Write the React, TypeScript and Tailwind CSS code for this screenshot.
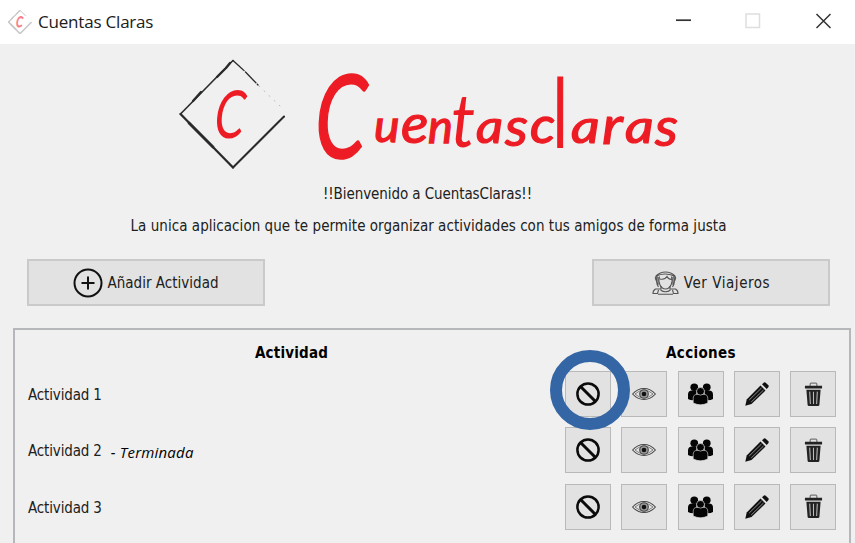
import React from "react";

const ui = "font-['DejaVu_Sans_Condensed','DejaVu_Sans',sans-serif] [font-stretch:condensed]";

function Mark({ className, faded = false }: { className: string; faded?: boolean }) {
  return (
    <svg className={className} viewBox="0 0 108 110" opacity={faded ? 0.55 : 1}>
      <g fill="none" stroke={faded ? "#999" : "#2a2a2a"} strokeLinecap="round">
        <path d="M1.500 55L54 1.500" strokeWidth={faded ? 5 : 1.6} />
        <path d="M22 33L14 42M46 10L38 18M51 4L47 9" strokeWidth={faded ? 5 : 2.300} />
        <path d="M1.500 55L54 108.500" strokeWidth={faded ? 7 : 2.300} />
        <path d="M10 64L34 88" strokeWidth={faded ? 7 : 2.800} />
        <path d="M54 108.500L105 57.500" strokeWidth={faded ? 7 : 2} />
        <path d="M54 1.500L66 12.500L79 26" strokeWidth={faded ? 4 : 1.300} strokeDasharray="9 1 5 2" />
        <path d="M80 27L101 47" strokeWidth=".7" opacity=".4" strokeDasharray="1 6" />
      </g>
      <text
        transform="translate(34 78.500) skewX(-5) scale(.95 1.300)"
        fontSize="51"
        fill={faded ? "#f01028" : "#ed1c24"}
        stroke={faded ? "#f01028" : "none"}
        strokeWidth={faded ? 3 : 0}
        className="font-['Lato',sans-serif] italic"
      >
        C
      </text>
    </svg>
  );
}

const letters = [
  { c: "C", t: "translate(314 158) skewX(-2) scale(1.780 2.520)", w: 0.7 },
  { c: "u", t: "translate(374 142) scale(1.050 .98)", w: 1.3 },
  { c: "e", t: "translate(401 143) scale(1.250 1.180)", w: 1 },
  { c: "n", t: "translate(428 143) scale(1.020 1.020)", w: 1.3 },
  { c: "t", t: "translate(451 147) scale(1.480 1.600)", w: 0 },
  { c: "a", t: "translate(476 143) scale(1.150 1)", w: 1.2 },
  { c: "s", t: "translate(505 146) scale(1.250 1.180)", w: 1 },
  { c: "c", t: "translate(530 143) scale(1.200 1.080)", w: 1.2 },
  { c: "l", t: "translate(556 147) skewX(4) scale(1.200 2.050)", w: 0.9 },
  { c: "a", t: "translate(571 143) scale(1.220 1)", w: 1.2 },
  { c: "r", t: "translate(602 144) scale(1.320 1.150)", w: 1 },
  { c: "a", t: "translate(625 143) scale(1.220 1)", w: 1.2 },
  { c: "s", t: "translate(655 146) scale(1.250 1.180)", w: 1 },
];

function Wordmark() {
  return (
    <svg className="h-[110px] w-[380px] overflow-visible" viewBox="310 66 380 110" fill="#ed1c24" stroke="#ed1c24">
      <g className="font-['Lato',sans-serif] italic" fontSize="46">
        {letters.map((l, i) => (
          <text key={i} transform={l.t} strokeWidth={l.w}>{l.c}</text>
        ))}
      </g>
    </svg>
  );
}

function Ban() {
  return (
    <svg className="h-6 w-6" viewBox="0 0 24 24" fill="none" stroke="#0b0b0b" strokeWidth="2.500">
      <circle cx="12" cy="12" r="10.600" />
      <path d="M4.500 4.500L19.500 19.500" strokeWidth="3" />
    </svg>
  );
}

function Eye() {
  return (
    <svg className="h-6 w-6" viewBox="0 0 24 24" fill="none" stroke="#454545" strokeWidth="1.100">
      <path d="M.6 12Q5.500 6.500 12 6.500T23.400 12Q18.500 17.500 12 17.500T.6 12Z" />
      <path d="M3 12Q7 8.300 12 8.300T21 12Q17 15.800 12 15.800T3 12Z" strokeWidth=".6" />
      <circle cx="12" cy="12" r="4.300" fill="#999" />
      <circle cx="12" cy="12" r="2.300" fill="#111" stroke="none" />
    </svg>
  );
}

function Group() {
  return (
    <svg className="h-6 w-[25px]" viewBox="0 0 24 24" preserveAspectRatio="none" fill="#050505">
      <circle cx="6" cy="5.300" r="3.700" />
      <circle cx="18" cy="5.300" r="3.700" />
      <path d="M0 17v-4.500Q0 8.500 4 8.500h4v9.500Q3 19 0 17ZM24 17v-4.500Q24 8.500 20 8.500h-4v9.500Q21 19 24 17Z" />
      <g stroke="#e2e2e2" strokeWidth=".6">
        <path d="M5 21v-4.500Q5 12.300 9 12.300h6q4 0 4 4.200V21Q12 24.500 5 21Z" />
        <circle cx="12" cy="9.300" r="3.800" />
      </g>
    </svg>
  );
}

function Pencil() {
  return (
    <svg className="h-6 w-6" viewBox="0 0 24 24" fill="#111">
      <path d="M.3 23.700L1.700 17.500 15.500 3.500 20.500 8.500 6.500 22Z" />
      <path d="M17 2.200L19 .5Q20 0 21 1L23.400 3.200Q24.200 4 23.300 5.200L21.700 7Z" />
      <path d="M4.200 18L16.500 6M6.200 20L18.500 8" stroke="#aaa" strokeWidth=".8" />
    </svg>
  );
}

function Trash() {
  return (
    <svg className="h-[25px] w-[19px]" viewBox="0 0 20 26" fill="#222">
      <path d="M6.500 4V2q0-1 1-1h5q1 0 1 1v2" fill="none" stroke="#777" strokeWidth="1.300" />
      <path d="M1 3.700h18v3H1ZM2.500 8h15l-1.300 16q-.1 1.200-1.500 1.200H5.300q-1.400 0-1.500-1.200Z" />
      <path d="M6 10l.7 13M10 10v13M14 10l-.7 13" stroke="#bbb" strokeWidth="1.100" />
    </svg>
  );
}

function Traveler() {
  return (
    <svg className="h-6 w-[27px]" viewBox="0 0 27 24" fill="none" stroke="#555" strokeWidth="1.100">
      <path d="M4 5Q8 1 13.500 1T23 5M4 5Q2.500 7 4 9.500M23 5Q24.500 7 23 9.500M4 5.500Q8 2.800 13.500 3T23 5.500" />
      <path d="M7.500 5.500Q6 10 8 14Q10 18 13.500 18T19 14Q21 10 19.500 5.500M8 8Q13 9 15 5.500Q16 8 19.500 8.500" />
      <path d="M5 4.500Q3.500 12 6.500 16M22 4.500Q23.500 12 20.500 16M6 6v8M21 6v8" />
      <path d="M9 15v3L3.500 18Q.8 19.500 1 22.500H5.500L6.500 19M18 15v3l5.500 0Q26.200 19.500 26 22.500H21.500L20.500 19M6 23.200H21M8.500 19Q13.500 22.500 18.500 19" />
    </svg>
  );
}

function ActionButton({ children }: { children: React.ReactNode }) {
  return (
    <button className="relative flex h-[46px] w-[46px] shrink-0 items-center justify-center border border-[#b9b9b9] bg-[#e2e2e2]">
      {children}
    </button>
  );
}

const activities = [
  { name: "Actividad 1", done: false, highlight: true },
  { name: "Actividad 2", done: true, highlight: false },
  { name: "Actividad 3", done: false, highlight: false },
];

export default function App() {
  return (
    <div className={`flex h-[543px] w-[855px] flex-col overflow-hidden bg-[#f0f0f0] text-[15px] text-[#202020] ${ui}`}>
      <header className="flex h-11 shrink-0 items-center bg-white pl-2">
        <Mark className="h-6 w-6" faded />
        <span className="ml-[6px] flex-1 font-['Open_Sans',sans-serif] text-[17px] tracking-[-0.2px] [font-stretch:normal]">Cuentas Claras</span>
        <svg className="h-11 w-[190px]" viewBox="665 0 190 44" fill="none" stroke="#333">
          <path d="M676 20.200h15" strokeWidth="1.700" />
          <rect x="746" y="14" width="13.500" height="13.500" stroke="#dedede" strokeWidth="1.500" />
          <path d="M816.500 14l14 14M830.500 14l-14 14" strokeWidth="1.500" />
        </svg>
      </header>

      <section className="flex h-[135px] shrink-0 pl-[179px] pt-[15px]">
        <Mark className="h-[110px] w-[108px]" />
        <div className="ml-[23px] mt-[7px]"><Wordmark /></div>
      </section>
      <section className="flex h-[80px] shrink-0 flex-col items-center pt-[5px] leading-5 whitespace-nowrap">
        <p className="tracking-[-0.08px]">!!Bienvenido a CuentasClaras!!</p>
        <p className="mt-[12px] pl-[2px] tracking-[0.045px]">La unica aplicacion que te permite organizar actividades con tus amigos de forma justa</p>
      </section>

      <div className="flex h-[69px] shrink-0 justify-between pl-[27px] pr-[25px]">
        <button className="flex h-[47px] w-[238px] items-center justify-center border-2 border-[#cacaca] bg-[#e2e2e2]">
          <svg className="mr-1 h-[30px] w-[30px]" viewBox="0 0 30 30" fill="none" stroke="#111" strokeWidth="2">
            <circle cx="15" cy="15" r="13.500" />
            <path d="M8.500 15h13M15 8.500v13" />
          </svg>
          <span className="pt-[2px] tracking-[0.02px]">Añadir Actividad</span>
        </button>
        <button className="flex h-[47px] w-[238px] items-center justify-center border-2 border-[#cacaca] bg-[#e2e2e2]">
          <Traveler />
          <span className="ml-[5px] pt-[2px] tracking-[0.55px]">Ver Viajeros</span>
        </button>
      </div>

      <main className="ml-[13px] mr-1 flex-1 border-2 border-b-0 border-[#b5b7ba] pt-[13px]">
        <div className="flex h-7 font-bold leading-5 text-black">
          <span className="w-[553px] text-center tracking-[0.2px]">Actividad</span>
          <span className="w-[266px] text-center tracking-[0.35px]">Acciones</span>
        </div>
        <div className="flex flex-col gap-[10.400px]">
          {activities.map((a) => (
            <div key={a.name} className="flex h-[46px] items-center pl-[13px]">
              <div className="flex w-[537px] items-center">
                <span className="pt-[2px] tracking-[-0.15px]">{a.name}</span>
                {a.done && (
                  <span className="ml-[9px] mt-1 font-['Open_Sans',sans-serif] text-[15px] italic tracking-[0.2px] text-black [font-stretch:normal]">- Terminada</span>
                )}
              </div>
              <div className="flex gap-[10.300px]">
                <ActionButton>
                  <Ban />
                  {a.highlight && (
                    <span className="absolute left-[-16px] top-[-22px] z-10 h-[80px] w-[80px] rounded-full border-[12px] border-[#3465a4]" />
                  )}
                </ActionButton>
                <ActionButton><Eye /></ActionButton>
                <ActionButton><Group /></ActionButton>
                <ActionButton><Pencil /></ActionButton>
                <ActionButton><Trash /></ActionButton>
              </div>
            </div>
          ))}
        </div>
      </main>
    </div>
  );
}
